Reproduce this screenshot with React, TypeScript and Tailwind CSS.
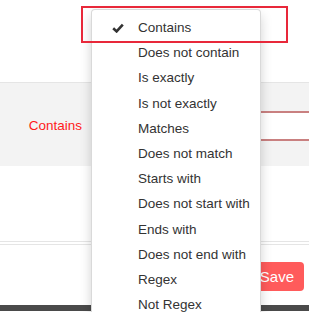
import React from "react";

const OPTIONS = [
  "Contains",
  "Does not contain",
  "Is exactly",
  "Is not exactly",
  "Matches",
  "Does not match",
  "Starts with",
  "Does not start with",
  "Ends with",
  "Does not end with",
  "Regex",
  "Not Regex",
];

function CheckIcon() {
  return (
    <svg width="12" height="10" viewBox="0 0 12 10" className="block">
      <path d="M1.2 5.2 L4.6 8.4 L10.8 1.6" fill="none" stroke="#333" strokeWidth="2.6" strokeLinejoin="miter" />
    </svg>
  );
}

export default function App() {
  const selected = "Contains";

  return (
    <div className="relative w-[309px] h-[312px] overflow-hidden bg-white font-['Liberation_Sans',Arial,sans-serif] text-[13.5px] text-[#333]">
      {/* Modal body */}
      <div className="h-[83px] border-b border-[#e5e5e5]" />

      <div className="h-[83px] bg-[#f3f3f3] flex items-center pt-[3px]">
        <label className="w-[82px] shrink-0 text-right text-[#ff1a1a] leading-none">Contains</label>
        <div className="ml-[18px] w-[240px] shrink-0 h-[30px] bg-white border-y-2 border-[#c98080]" />
      </div>

      <div className="h-[76px] border-b border-[#e5e5e5]" />

      {/* Footer */}
      <div className="mt-[2px] h-[61px] border-t border-[#e5e5e5] flex items-center justify-end pr-[5px] pt-[2px]">
        <button className="h-[29px] px-[10px] rounded-[4px] bg-[#ff5b5b] text-white text-[15px] leading-none">
          Save
        </button>
      </div>

      <div className="h-[6px] bg-[#4a4a4a]" />

      {/* Dropdown menu */}
      <ul className="absolute left-[91px] top-[9px] w-[170px] bg-white border border-[rgba(0,0,0,0.15)] rounded-[4px] shadow-[0_6px_12px_rgba(0,0,0,0.175)] py-[5px]">
        {OPTIONS.map((opt) => (
          <li key={opt} className="relative h-[25.2px] leading-[25.2px] pl-[46px] whitespace-nowrap">
            {opt === selected && (
              <span className="absolute left-[20px] top-[8px]">
                <CheckIcon />
              </span>
            )}
            {opt}
          </li>
        ))}
      </ul>

      {/* Highlight annotation */}
      <div className="absolute left-[81px] top-[6px] w-[207px] h-[37px] border-2 border-[#e8283a]" />
    </div>
  );
}
